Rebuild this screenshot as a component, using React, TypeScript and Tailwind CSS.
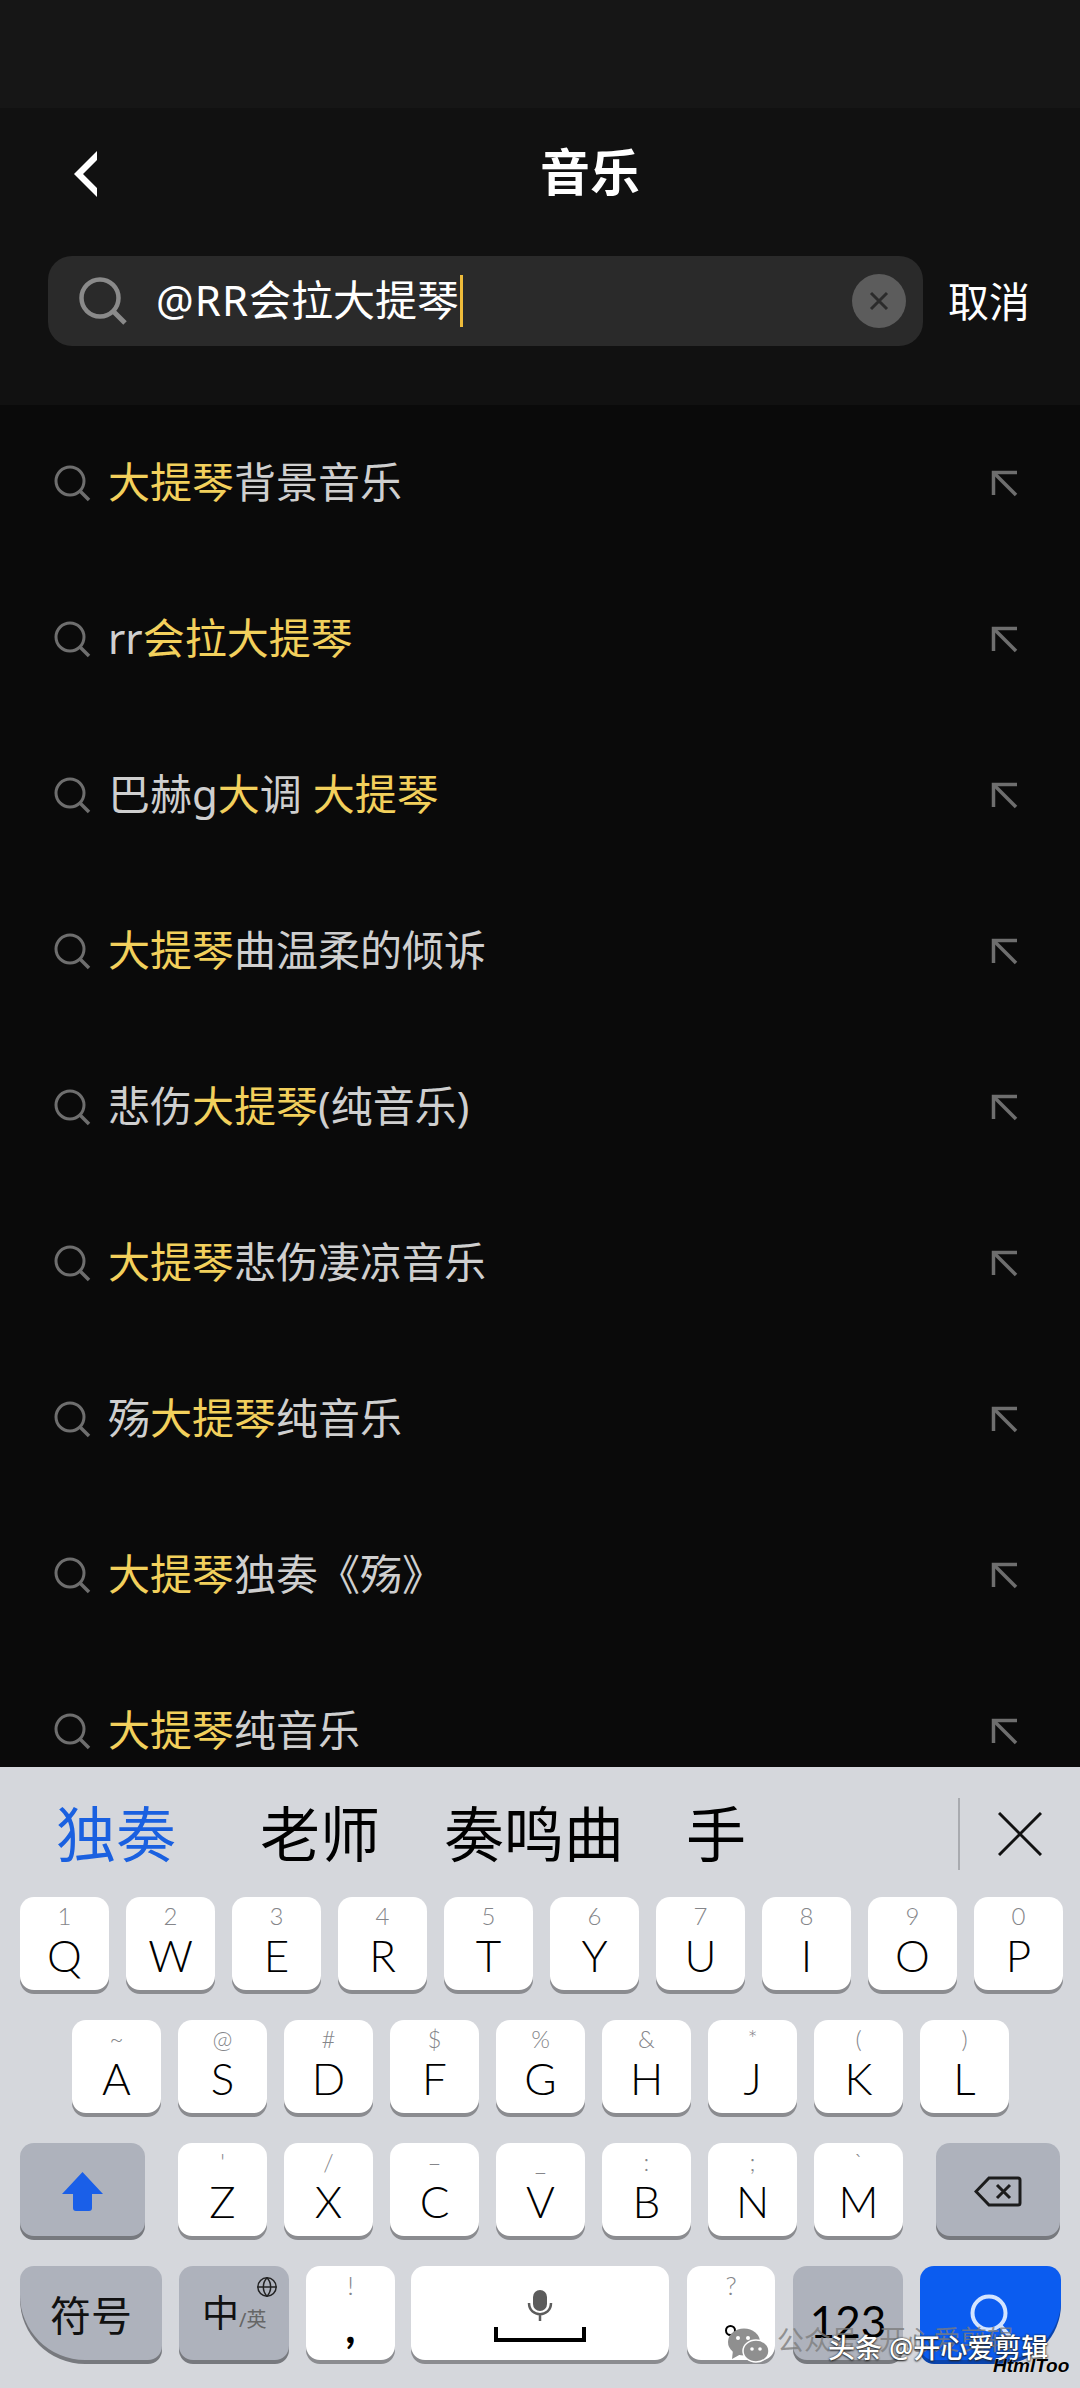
import { Globe } from "lucide-react";

const CJK = "font-['Noto_Sans','Noto_Sans_CJK_SC',sans-serif]";
const KEY_FONT = "font-['Lato','Noto_Sans_CJK_SC',sans-serif]";

// [text, highlighted]
const RESULTS: [string, boolean][][] = [
  [["大提琴", true], ["背景音乐", false]],
  [["rr", false], ["会拉大提琴", true]],
  [["巴赫g", false], ["大", true], ["调 ", false], ["大提琴", true]],
  [["大提琴", true], ["曲温柔的倾诉", false]],
  [["悲伤", false], ["大提琴", true], ["(纯音乐)", false]],
  [["大提琴", true], ["悲伤凄凉音乐", false]],
  [["殇", false], ["大提琴", true], ["纯音乐", false]],
  [["大提琴", true], ["独奏《殇》", false]],
  [["大提琴", true], ["纯音乐", false]],
];

const ROW_1 = [["1", "Q"], ["2", "W"], ["3", "E"], ["4", "R"], ["5", "T"], ["6", "Y"], ["7", "U"], ["8", "I"], ["9", "O"], ["0", "P"]];
const ROW_2 = [["~", "A"], ["@", "S"], ["#", "D"], ["$", "F"], ["%", "G"], ["&", "H"], ["*", "J"], ["(", "K"], [")", "L"]];
const ROW_3 = [["'", "Z"], ["/", "X"], ["–", "C"], ["_", "V"], [":", "B"], [";", "N"], ["`", "M"]];

function Key({ hint, label }: { hint: string; label: string }) {
  return (
    <div className={`w-[89px] h-[93px] shrink-0 flex flex-col items-center rounded-[14px] bg-white shadow-[0_4px_0_#8b8c90] ${KEY_FONT}`}>
      <span className="mt-[7px] h-[24px] text-[24px] leading-[24px] font-light text-[#85868a]">{hint}</span>
      <span className="mt-[5px] h-[44px] text-[44px] leading-[44px] font-light text-black">{label}</span>
    </div>
  );
}

function SearchGlyph() {
  return (
    <svg width="37" height="37" viewBox="0 0 37 37" fill="none" stroke="#6e6e6e" className="shrink-0">
      <circle cx="16" cy="16" r="14" strokeWidth="3" />
      <path d="M26 26l9 9" strokeWidth="3.5" />
    </svg>
  );
}

function ResultRow({ parts }: { parts: [string, boolean][] }) {
  return (
    <div className="h-[156px] shrink-0 flex items-center pl-[54px]">
      <SearchGlyph />
      <div className={`ml-[17px] mb-[3px] text-[42px] leading-[56px] whitespace-pre text-[#cfcfcf] ${CJK}`}>
        {parts.map(([text, hot], i) => (
          <span key={i} className={hot ? "text-[#f2d05c]" : ""}>{text}</span>
        ))}
      </div>
      <svg width="28" height="28" viewBox="0 0 28 28" fill="none" stroke="#6e6e6e" strokeWidth="3.5" className="ml-auto mr-[62px]">
        <path d="M3.5 26V3.5H27" />
        <path d="M4 4l22 22" />
      </svg>
    </div>
  );
}

export default function App() {
  return (
    <div className={`relative w-[1080px] h-[2388px] overflow-hidden flex flex-col bg-[#0a0a0a] ${CJK}`}>
      <div className="h-[108px] shrink-0 bg-[#161616]" />

      <div className="h-[297px] shrink-0 bg-[#111111]">
        <div className="h-[124px] flex items-center pl-[74px]">
          <svg width="24" height="46" viewBox="0 0 24 46" className="mt-[8px] shrink-0">
            <path d="M23 0v9L9 23l14 14v9L0 23z" fill="#fff" />
          </svg>
          <div className="ml-[442px] mt-[3px] text-[50px] leading-[60px] font-bold text-white">音乐</div>
        </div>
        <div className="mt-[24px] flex items-center pl-[48px]">
          <div className="w-[875px] h-[90px] flex items-center rounded-[24px] bg-[#2a2a2a]">
            <svg width="48" height="48" viewBox="0 0 48 48" fill="none" stroke="#8a8a8a" className="ml-[31px] shrink-0">
              <circle cx="21" cy="21" r="18.5" strokeWidth="4.5" />
              <path d="M34 34l12 12" strokeWidth="5" />
            </svg>
            <div className="ml-[29px] mb-[2px] text-[42px] leading-[56px] text-white">
              <span className="tracking-[1px]">@RR</span>会拉大提琴
            </div>
            <div className="ml-[1px] w-[3px] h-[52px] bg-[#eebb3a]" />
            <div className="ml-auto mr-[17px] w-[54px] h-[54px] rounded-full bg-[#5c5c5c] flex items-center justify-center">
              <svg width="20" height="20" viewBox="0 0 20 20" stroke="#2b2b2b" strokeWidth="3">
                <path d="M2 2l16 16M18 2L2 18" />
              </svg>
            </div>
          </div>
          <div className="ml-[25px] text-[41px] leading-[52px] text-white">取消</div>
        </div>
      </div>

      <div className="flex-1 min-h-0 overflow-hidden flex flex-col">
        {RESULTS.map((parts, i) => (
          <ResultRow key={i} parts={parts} />
        ))}
      </div>

      <div className="h-[621px] shrink-0 bg-[#d5d7dc]">
        <div className="h-[130px] pt-[3px] flex items-center text-[60px] leading-[70px] text-black">
          <span className="ml-[56px] text-[#1a60e0]">独奏</span>
          <span className="ml-[84px]">老师</span>
          <span className="ml-[64px]">奏鸣曲</span>
          <span className="ml-[62px]">手</span>
          <div className="ml-[212px] w-[2px] h-[72px] bg-[#a9abb0]" />
          <svg width="44" height="44" viewBox="0 0 44 44" stroke="#111" strokeWidth="3" className="ml-[38px]">
            <path d="M1 1l42 42M43 1L1 43" />
          </svg>
        </div>

        <div className="flex flex-col gap-[30px]">
          <div className="flex gap-[17px] pl-[20px]">
            {ROW_1.map(([hint, label]) => <Key key={label} hint={hint} label={label} />)}
          </div>
          <div className="flex gap-[17px] pl-[72px]">
            {ROW_2.map(([hint, label]) => <Key key={label} hint={hint} label={label} />)}
          </div>
          <div className="flex pl-[20px]">
            <div className="w-[125px] h-[93px] flex items-center justify-center rounded-[14px] bg-[#aeb2bc] shadow-[0_4px_0_#77797e]">
              <svg width="41" height="39" viewBox="0 0 41 39" className="mt-[4px]">
                <path d="M20.5 0L41 22H30v14a3 3 0 0 1-3 3H14a3 3 0 0 1-3-3V22H0z" fill="#1a5fe8" />
              </svg>
            </div>
            <div className="ml-[33px] flex gap-[17px]">
              {ROW_3.map(([hint, label]) => <Key key={label} hint={hint} label={label} />)}
            </div>
            <div className="ml-[33px] w-[124px] h-[93px] flex items-center justify-center rounded-[14px] bg-[#aeb2bc] shadow-[0_4px_0_#77797e]">
              <svg width="48" height="31" viewBox="0 0 48 31" fill="none" stroke="#1c1c1c" strokeWidth="3" className="mt-[4px]">
                <path d="M15 2h29a2 2 0 0 1 2 2v23a2 2 0 0 1-2 2H15L2 15.500z" />
                <path d="M23 9l13 13M36 9L23 22" />
              </svg>
            </div>
          </div>

          <div className="flex pl-[20px]">
            <div className="w-[142px] h-[94px] flex items-center justify-center rounded-[14px] rounded-bl-[65px] bg-[#aeb2bc] shadow-[0_4px_0_#77797e] text-[41px] leading-[50px] text-[#111]">
              <span className="mt-[3px]">符号</span>
            </div>
            <div className="relative ml-[17px] w-[110px] h-[94px] flex items-center pl-[23px] rounded-[14px] bg-[#aeb2bc] shadow-[0_4px_0_#77797e]">
              <span className="text-[37px] leading-[44px] text-[#111]">中</span>
              <span className="mt-[14px] text-[20px] leading-[26px] text-[#666]">/英</span>
              <Globe className="absolute right-[11px] top-[10px] w-[22px] h-[22px] text-[#222]" strokeWidth={1.6} />
            </div>
            <div className={`ml-[17px] w-[89px] h-[94px] flex flex-col items-center rounded-[14px] bg-white shadow-[0_4px_0_#8b8c90] ${KEY_FONT}`}>
              <span className="mt-[6px] h-[26px] text-[26px] leading-[26px] font-light text-[#85868a]">!</span>
              <span className="mt-[6px] h-[44px] text-[44px] leading-[44px] font-bold text-black">,</span>
            </div>
            <div className="ml-[16px] w-[258px] h-[94px] flex flex-col items-center rounded-[14px] bg-white shadow-[0_4px_0_#8b8c90]">
              <svg width="26" height="31" viewBox="0 0 26 31" className="mt-[24px]">
                <rect x="6" y="0" width="14" height="21" rx="7" fill="#5c5c5c" />
                <path d="M2 13c0 15 22 15 22 0M13 24v7" fill="none" stroke="#5c5c5c" strokeWidth="2.5" />
              </svg>
              <svg width="92" height="16" viewBox="0 0 92 16" fill="none" stroke="#000" strokeWidth="4" className="mt-[6px]">
                <path d="M2 0v13h88V0" />
              </svg>
            </div>
            <div className={`ml-[18px] w-[88px] h-[94px] flex flex-col items-center rounded-[14px] bg-white shadow-[0_4px_0_#8b8c90] ${KEY_FONT}`}>
              <span className="mt-[6px] h-[26px] text-[26px] leading-[26px] font-light text-[#85868a]">?</span>
              <div className="mt-[27px] mr-[2px] w-[11px] h-[11px] rounded-full border-2 border-black" />
            </div>
            <div className={`ml-[18px] w-[110px] h-[94px] flex items-center justify-center pt-[16px] rounded-[14px] bg-[#aeb2bc] shadow-[0_4px_0_#77797e] text-[44px] leading-[50px] font-normal text-black ${KEY_FONT}`}>
              123
            </div>
            <div className="ml-[17px] w-[141px] h-[94px] flex items-start justify-center pt-[28px] rounded-[14px] rounded-br-[60px] bg-[#0b5cf0] shadow-[0_4px_0_#0a44ad]">
              <svg width="46" height="50" viewBox="0 0 46 50" fill="none" stroke="#d3e4ff" strokeWidth="4">
                <circle cx="21" cy="19" r="16.500" />
                <path d="M32 31l12 14" />
              </svg>
            </div>
          </div>
        </div>
      </div>

      {/* watermarks over the keyboard */}
      <svg width="42" height="36" viewBox="0 0 42 36" className="absolute left-[727px] top-[2328px]">
        <ellipse cx="17" cy="14" rx="16" ry="13.500" fill="#8f8f8f" />
        <path d="M6 22l-1 9 9-5z" fill="#8f8f8f" />
        <ellipse cx="29" cy="23" rx="13" ry="11" fill="#8f8f8f" stroke="#fff" strokeWidth="1.500" />
        <circle cx="25" cy="21" r="1.800" fill="#fff" />
        <circle cx="33" cy="21" r="1.800" fill="#fff" />
        <circle cx="11" cy="10" r="2" fill="#fff" />
        <circle cx="21" cy="10" r="2" fill="#fff" />
      </svg>
      <div className="absolute left-[777px] top-[2322px] text-[27px] leading-[36px] whitespace-nowrap text-[#7d7d7d]/80">公众号 · 开心爱剪辑</div>
      <div className="absolute left-[828px] top-[2330px] text-[27px] leading-[36px] font-medium whitespace-nowrap text-white [text-shadow:0_0_2px_#222,0_1px_2px_#222]">头条 @开心爱剪辑</div>
      <div className="absolute left-[993px] top-[2355px] font-['Liberation_Sans',sans-serif] text-[19px] leading-[22px] font-bold italic text-black [text-shadow:0_0_1px_#fff]">HtmlToo</div>
    </div>
  );
}
